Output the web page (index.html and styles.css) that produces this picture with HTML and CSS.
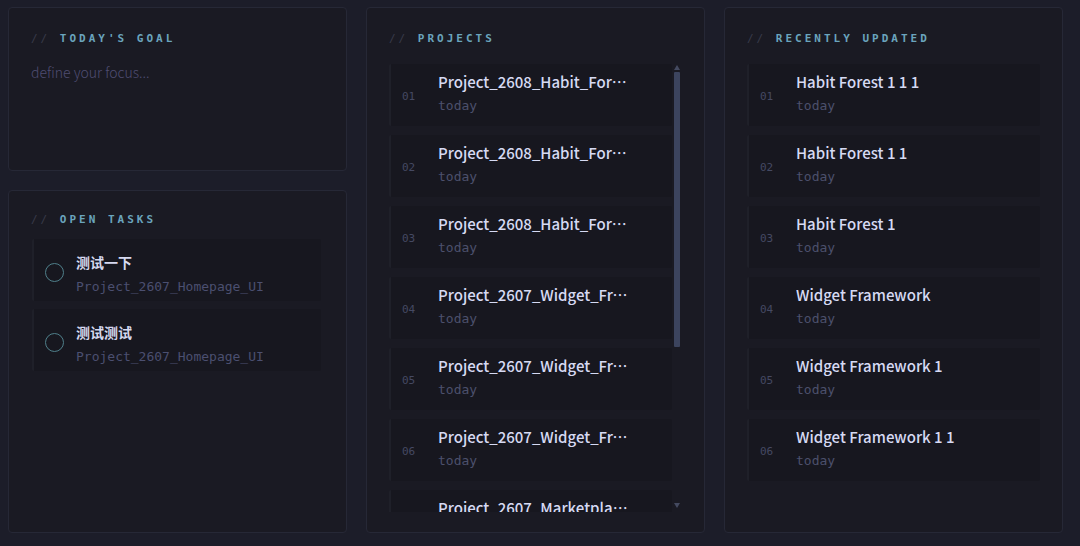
FILE: index.html
```html
<!DOCTYPE html>
<html lang="en">
<head>
<meta charset="utf-8">
<title>Dashboard</title>
<link rel="stylesheet" href="styles.css">
</head>
<body>
<main class="board">
  <div class="column">
    <section class="card card-goal">
      <h2 class="card-title"><span class="slashes">//</span> TODAY'S GOAL</h2>
      <div class="goal-input">define your focus...</div>
    </section>
    <section class="card card-tasks">
      <h2 class="card-title"><span class="slashes">//</span> OPEN TASKS</h2>
      <ul class="task-list">
        <li class="task">
          <span class="check"></span>
          <div class="task-text">
            <div class="task-name">测试一下</div>
            <div class="task-project">Project_2607_Homepage_UI</div>
          </div>
        </li>
        <li class="task">
          <span class="check"></span>
          <div class="task-text">
            <div class="task-name">测试测试</div>
            <div class="task-project">Project_2607_Homepage_UI</div>
          </div>
        </li>
      </ul>
    </section>
  </div>

  <section class="card card-projects">
    <h2 class="card-title"><span class="slashes">//</span> PROJECTS</h2>
    <div class="scroll-area">
      <ul class="entry-list projects">
        <li class="entry"><span class="num">01</span><div class="entry-text"><div class="entry-name">Project_2608_Habit_Forest_1_1_1</div><div class="entry-date">today</div></div></li>
        <li class="entry"><span class="num">02</span><div class="entry-text"><div class="entry-name">Project_2608_Habit_Forest_1_1</div><div class="entry-date">today</div></div></li>
        <li class="entry"><span class="num">03</span><div class="entry-text"><div class="entry-name">Project_2608_Habit_Forest_1</div><div class="entry-date">today</div></div></li>
        <li class="entry"><span class="num">04</span><div class="entry-text"><div class="entry-name">Project_2607_Widget_Framework</div><div class="entry-date">today</div></div></li>
        <li class="entry"><span class="num">05</span><div class="entry-text"><div class="entry-name">Project_2607_Widget_Framework_1</div><div class="entry-date">today</div></div></li>
        <li class="entry"><span class="num">06</span><div class="entry-text"><div class="entry-name">Project_2607_Widget_Framework_1_1</div><div class="entry-date">today</div></div></li>
        <li class="entry"><span class="num">07</span><div class="entry-text"><div class="entry-name">Project_2607_Marketplace_UI</div><div class="entry-date">today</div></div></li>
      </ul>
      <div class="rail">
        <span class="rail-up"></span>
        <span class="rail-thumb"></span>
        <span class="rail-down"></span>
      </div>
    </div>
  </section>

  <section class="card card-recent">
    <h2 class="card-title"><span class="slashes">//</span> RECENTLY UPDATED</h2>
    <ul class="entry-list recent">
      <li class="entry"><span class="num">01</span><div class="entry-text"><div class="entry-name">Habit Forest 1 1 1</div><div class="entry-date">today</div></div></li>
      <li class="entry"><span class="num">02</span><div class="entry-text"><div class="entry-name">Habit Forest 1 1</div><div class="entry-date">today</div></div></li>
      <li class="entry"><span class="num">03</span><div class="entry-text"><div class="entry-name">Habit Forest 1</div><div class="entry-date">today</div></div></li>
      <li class="entry"><span class="num">04</span><div class="entry-text"><div class="entry-name">Widget Framework</div><div class="entry-date">today</div></div></li>
      <li class="entry"><span class="num">05</span><div class="entry-text"><div class="entry-name">Widget Framework 1</div><div class="entry-date">today</div></div></li>
      <li class="entry"><span class="num">06</span><div class="entry-text"><div class="entry-name">Widget Framework 1 1</div><div class="entry-date">today</div></div></li>
    </ul>
  </section>
</main>
</body>
</html>
```

FILE: styles.css
```css
* { box-sizing: border-box; }

html, body {
  margin: 0;
  height: 100%;
  background: #1c1d29;
  overflow: hidden;
}

body {
  font-family: "Noto Sans CJK SC", "Noto Sans", sans-serif;
  color: #d9dcf2;
}

ul { list-style: none; margin: 0; padding: 0; }

.board {
  display: grid;
  grid-template-columns: 339px 339px 339px;
  column-gap: 19px;
  padding: 7px 17px 13px 8px;
  height: 546px;
}

.column {
  display: grid;
  grid-template-rows: 164px 1fr;
  row-gap: 19px;
  min-height: 0;
}

.card {
  background: #1a1a23;
  border: 1px solid #262836;
  border-radius: 4px;
  padding: 23px 22px 0 22px;
  min-height: 0;
  display: flex;
  flex-direction: column;
}

.card-title {
  margin: 0;
  font-family: "DejaVu Sans Mono", monospace;
  font-weight: bold;
  font-size: 11px;
  line-height: 16px;
  letter-spacing: 3px;
  color: #6aa4bd;
}

.slashes {
  color: #393b4a;
  font-weight: normal;
}

.goal-input {
  margin-top: 14px;
  font-family: "Noto Sans CJK SC", "Noto Sans", sans-serif;
  font-weight: 300;
  font-size: 14px;
  line-height: 22px;
  color: #4f4d72;
}

/* open tasks */
.card-tasks { padding-top: 21px; }

.task-list {
  margin-top: 11px;
  display: flex;
  flex-direction: column;
  gap: 8px;
  padding-right: 3px;
  padding-left: 1px;
}

.task {
  display: flex;
  align-items: flex-start;
  height: 62px;
  background: #17171f;
  border-left: 2px solid #1f2029;
  border-radius: 2px;
  padding: 13px 0 0 11px;
}

.check {
  flex: none;
  width: 19px;
  height: 19px;
  margin-top: 11px;
  border: 1.5px solid #4f7f8a;
  border-radius: 50%;
}

.task-text { margin-left: 12px; }

.task-name {
  font-size: 14px;
  font-weight: bold;
  line-height: 20px;
  color: #d6d9ef;
}

.task-project {
  margin-top: 6px;
  font-family: "DejaVu Sans Mono", monospace;
  font-size: 13px;
  line-height: 18px;
  color: #4b4f70;
}

/* numbered entries */
.card-projects { padding-right: 24px; padding-bottom: 20px; }
.card-recent { padding-bottom: 20px; }

.scroll-area {
  margin-top: 17px;
  flex: 1;
  min-height: 0;
  display: flex;
  gap: 1px;
}

.entry-list {
  display: flex;
  flex-direction: column;
  gap: 9px;
}

.projects {
  flex: 1;
  min-width: 0;
  overflow: hidden;
}

.recent { margin-top: 17px; }

.entry {
  flex: none;
  display: flex;
  height: 62px;
  background: #17171f;
  border-left: 2px solid #1f2029;
  border-radius: 2px;
  padding-left: 11px;
}

.num {
  flex: none;
  width: 36px;
  align-self: center;
  padding-top: 2px;
  font-family: "DejaVu Sans Mono", monospace;
  font-size: 11px;
  color: #454962;
}

.entry-text {
  min-width: 0;
  padding-top: 8px;
}

.entry-name {
  font-size: 15px;
  font-weight: 500;
  line-height: 20px;
  color: #d6daf3;
  white-space: nowrap;
  overflow: hidden;
  text-overflow: ellipsis;
}

.projects .entry-name { max-width: 192px; }

.entry-date {
  margin-top: 5px;
  font-family: "DejaVu Sans Mono", monospace;
  font-size: 13px;
  line-height: 18px;
  color: #4c506c;
}

/* scroll rail beside the project list */
.rail {
  flex: none;
  width: 7px;
  display: flex;
  flex-direction: column;
  align-items: center;
}

.rail-up, .rail-down {
  flex: none;
  width: 0;
  height: 0;
  border-left: 3.5px solid transparent;
  border-right: 3.5px solid transparent;
}

.rail-up {
  margin-top: 1px;
  border-bottom: 5px solid #444a60;
}

.rail-thumb {
  width: 6px;
  height: 275px;
  margin-top: 2px;
  background: #3c445e;
  border-radius: 1px;
}

.rail-down {
  margin-top: auto;
  margin-bottom: 4px;
  border-top: 5px solid #444a60;
}
```
